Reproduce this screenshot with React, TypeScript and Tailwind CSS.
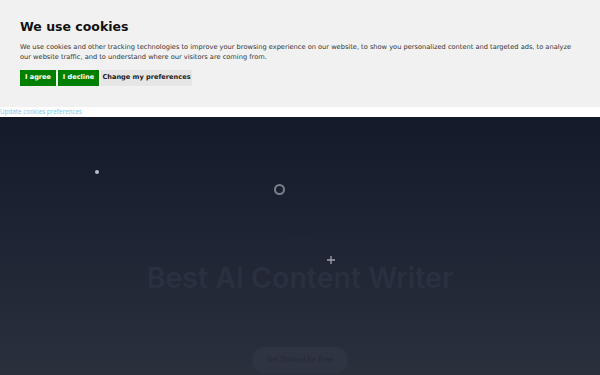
import React from "react";

export default function App() {
  return (
    <div className="w-[600px] h-[375px] overflow-hidden bg-white flex flex-col" style={{ fontFamily: '"DejaVu Sans", Verdana, sans-serif' }}>
      <div className="shrink-0 bg-[#f1f1f1] h-[107px] pl-[20px] pr-[20px] pt-[19px] flex flex-col">
        <h1 className="text-[12.5px] font-bold text-[#111] leading-[16px]">We use cookies</h1>
        <p className="mt-[7px] text-[6.65px] leading-[10px] text-[#333]">
          We use cookies and other tracking technologies to improve your browsing experience on our website, to show you personalized content and targeted ads, to analyze our website traffic, and to understand where our visitors are coming from.
        </p>
        <div className="mt-[8px] flex gap-[2px]">
          <button className="h-[16px] w-[36px] bg-[#008000] text-white text-[6.6px] font-bold">I agree</button>
          <button className="h-[16px] w-[41px] bg-[#008000] text-white text-[6.6px] font-bold">I decline</button>
          <button className="h-[16px] w-[91px] bg-[#e6e6e6] text-[#222] text-[6.6px] font-bold">Change my preferences</button>
        </div>
      </div>
      <div className="shrink-0 h-[10px] bg-white flex items-center">
        <span className="text-[6.3px] text-[#78c9f2] leading-[10px]" style={{ fontFamily: '"Open Sans", sans-serif' }}>Update cookies preferences</span>
      </div>
      <div className="relative flex-1 bg-gradient-to-b from-[#131a2a] to-[#2b303d] flex flex-col items-center" style={{ fontFamily: 'Inter, "Open Sans", sans-serif' }}>
        <div className="absolute left-[95px] top-[53px] w-[4px] h-[4px] rounded-full bg-[#b8bcc6]" />
        <div className="absolute left-[274px] top-[67px] w-[11px] h-[11px] rounded-full border-[2px] border-[#7b808c]" />
        <svg className="absolute left-[326px] top-[138px]" width="10" height="10" viewBox="0 0 10 10">
          <path d="M5 1v8M1 5h8" stroke="#9ea3ad" strokeWidth="1.3" />
        </svg>
        <div className="mt-[118px] h-[10px] px-[10px] rounded-full text-[7px] text-[#20273a] leading-[10px]">AI Writer</div>
        <h2 className="mt-[15px] text-[28.5px] font-semibold text-[#2a303f] leading-[35px]">Best AI Content Writer</h2>
        <p className="mt-[14px] w-[240px] text-center text-[7.5px] leading-[13px] text-[#272d3d]">
          Generate high-quality blog posts, articles and marketing copy in seconds with our AI writing assistant.
        </p>
        <button className="mt-[12px] w-[96px] h-[26px] rounded-full bg-[#2f3443] text-[7px] font-semibold text-[#262b38]">Get Started for Free</button>
      </div>
    </div>
  );
}
